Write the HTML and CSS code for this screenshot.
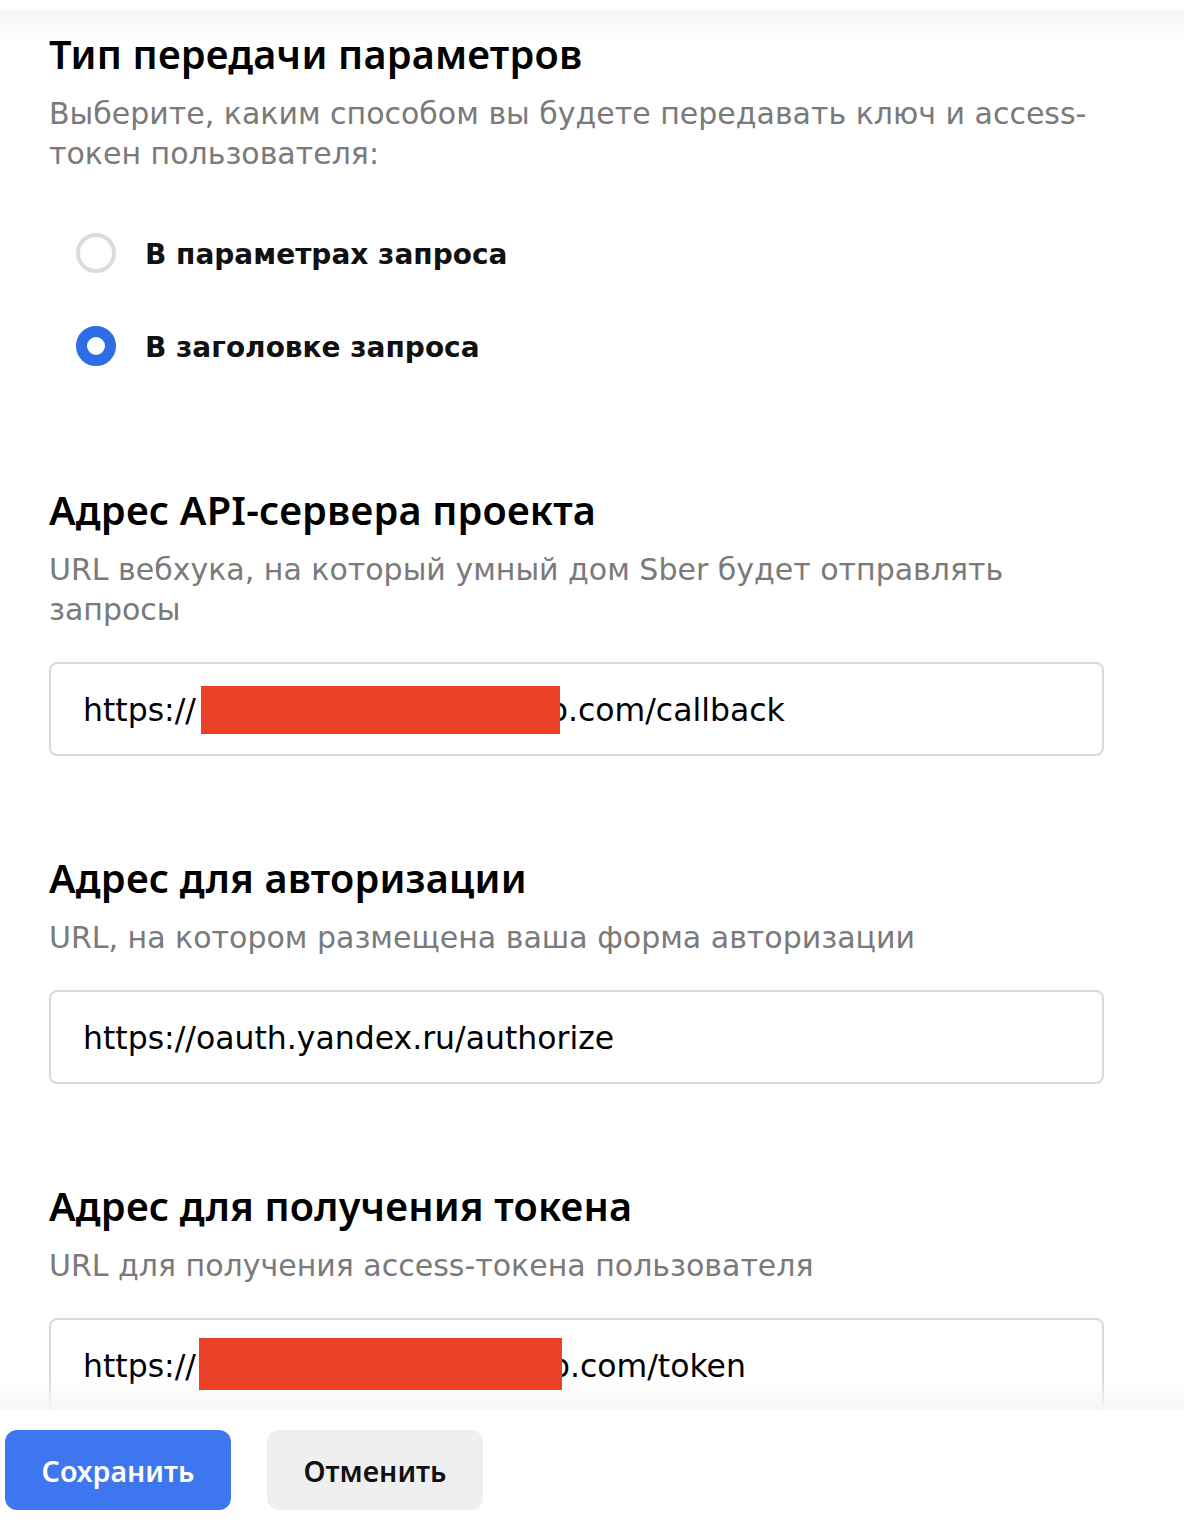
FILE: index.html
```html
<!DOCTYPE html>
<html lang="ru">
<head>
<meta charset="utf-8">
<title>Настройки</title>
<link rel="stylesheet" href="styles.css">
</head>
<body>
<div class="scroll">
  <div class="content">
    <section class="block">
      <h2 class="title">Тип передачи параметров</h2>
      <p class="hint">Выберите, каким способом вы будете передавать ключ и access-токен пользователя:</p>
      <div class="radios">
        <label class="radio"><span class="dot"></span><span class="radio-label">В параметрах запроса</span></label>
        <label class="radio"><span class="dot checked"></span><span class="radio-label">В заголовке запроса</span></label>
      </div>
    </section>
    <section class="block block-api">
      <h2 class="title">Адрес API-сервера проекта</h2>
      <p class="hint">URL вебхука, на который умный дом Sber будет отправлять запросы</p>
      <div class="field"><span>https://</span><span class="redact r1"></span><span>p.com/callback</span></div>
    </section>
    <section class="block block-next">
      <h2 class="title">Адрес для авторизации</h2>
      <p class="hint">URL, на котором размещена ваша форма авторизации</p>
      <div class="field"><span>https://oauth.yandex.ru/authorize</span></div>
    </section>
    <section class="block block-next">
      <h2 class="title">Адрес для получения токена</h2>
      <p class="hint">URL для получения access-токена пользователя</p>
      <div class="field"><span>https://</span><span class="redact r2"></span><span>p.com/token</span></div>
    </section>
  </div>
  <div class="fade-top"></div>
  <div class="fade-bottom"></div>
</div>
<div class="footer">
  <button class="btn btn-primary">Сохранить</button>
  <button class="btn btn-secondary">Отменить</button>
</div>
</body>
</html>
```
FILE: styles.css
```css
* { box-sizing: border-box; }
html, body { margin: 0; padding: 0; background: #fff; }
body {
  font-family: "DejaVu Sans", "Noto Sans", sans-serif;
  color: #000;
  width: 1184px;
}
.scroll {
  position: relative;
  height: 1410px;
  overflow: hidden;
}
.content {
  padding: 30px 0 0 49px;
  width: 1104px;
}
.fade-top {
  position: absolute;
  left: 0; right: 0; top: 10px;
  height: 30px;
  background: linear-gradient(#f6f6f6, rgba(255,255,255,0));
}
.fade-bottom {
  position: absolute;
  left: 0; right: 0; bottom: 0;
  height: 32px;
  background: linear-gradient(rgba(255,255,255,0), #f6f6f6);
}
.title {
  margin: 0;
  font-family: "Noto Sans", "Open Sans", sans-serif;
  font-size: 39.7px;
  line-height: 48px;
  font-weight: 600;
  letter-spacing: 0.2px;
}
.hint {
  margin: 16px 0 0;
  font-family: "DejaVu Sans", sans-serif;
  font-size: 30px;
  line-height: 40px;
  color: #7a7a7a;
  font-weight: 400;
}
.radios {
  display: flex;
  flex-direction: column;
  gap: 33px;
  margin-top: 49px;
  padding-left: 27px;
}
.radio {
  display: flex;
  align-items: center;
  height: 60px;
  gap: 29px;
}
.dot {
  width: 40px;
  height: 40px;
  border-radius: 50%;
  border: 4px solid #dcdcdc;
  flex: none;
}
.dot.checked {
  border: 11px solid #2f6ce8;
}
.radio-label {
  font-family: "DejaVu Sans", sans-serif;
  font-size: 28px;
  font-weight: 700;
  color: #111;
  padding-top: 2px;
}
.block-api { margin-top: 110px; }
.block-next { margin-top: 98px; }
.field {
  margin-top: 32px;
  height: 94px;
  border: 2px solid #d9d9d9;
  border-radius: 8px;
  display: flex;
  align-items: center;
  padding-left: 32px;
  padding-top: 2px;
  font-family: "DejaVu Sans", sans-serif;
  font-size: 31.5px;
  color: #000;
  white-space: pre;
}
.redact {
  display: inline-block;
  background: #ea4027;
  height: 48px;
  position: relative;
  z-index: 1;
}
.r1 { width: 359px; margin-left: 5px; margin-right: -12px; }
.r2 { width: 363px; margin-left: 3px; margin-right: -12px; height: 52px; margin-top: -4px; }
.footer {
  display: flex;
  gap: 36px;
  padding: 20px 0 0 5px;
}
.btn {
  font-family: "Noto Sans", "Open Sans", sans-serif;
  font-size: 28.6px;
  font-weight: 600;
  height: 80px;
  border: none;
  border-radius: 12px;
  padding: 0;
}
.btn-primary { width: 226px; background: #3d76ef; color: #fff; }
.btn-secondary { width: 216px; background: #efefef; color: #111; }
```
